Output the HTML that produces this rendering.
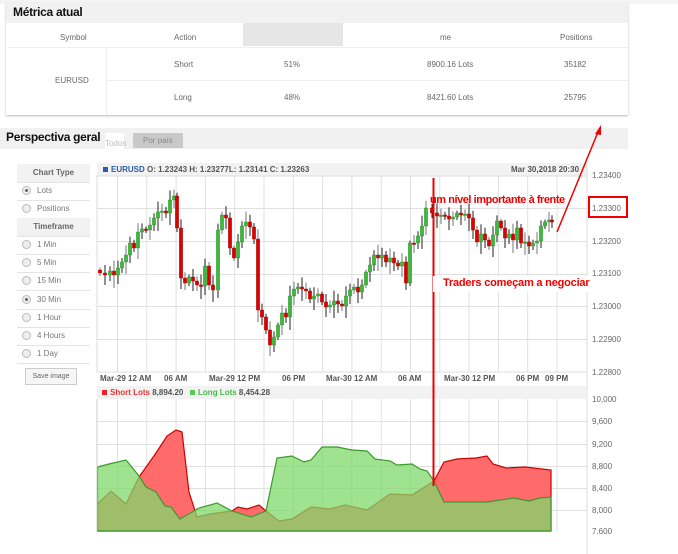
<!DOCTYPE html>
<html><head><meta charset="utf-8">
<style>
body{margin:0;width:678px;height:554px;background:#fff;position:relative;overflow:hidden;font-family:"Liberation Sans",sans-serif;}
.a{position:absolute;}
.t{font-size:8px;color:#666;position:absolute;}
.side{position:absolute;left:17px;width:73px;height:18px;border-bottom:1px solid #e4e4e4;font-size:8px;color:#777;line-height:18px;}
.side.h{background:#f2f2f2;text-align:center;font-weight:bold;color:#666;}
.rad{display:inline-block;width:7px;height:7px;border:1px solid #bbb;border-radius:50%;background:#eee;margin:0 6px 0 5px;vertical-align:-2px;position:relative;}
.rad.on:after{content:"";position:absolute;left:2px;top:2px;width:3px;height:3px;border-radius:50%;background:#666;}
.ax{position:absolute;font-size:8px;color:#666;left:592px;}
.xl{position:absolute;top:374px;font-size:8px;font-weight:bold;color:#555;}
</style></head><body>
<div class="a" style="left:0;top:0;width:678px;height:4px;background:#f4f4f4"></div>
<div class="a" style="left:6px;top:3px;width:622px;height:112px;background:#fff;box-shadow:0 1px 2px #bbb;"></div>
<div class="a" style="left:6px;top:3px;width:622px;height:20px;background:#f1f1f1;"></div>
<div class="a" style="left:13px;top:5px;font-size:12px;font-weight:bold;color:#111;letter-spacing:-0.3px;">Métrica atual</div>
<div class="a" style="left:8px;top:47px;width:620px;height:1px;background:#eee"></div>
<div class="a" style="left:106px;top:80px;width:522px;height:1px;background:#eee"></div>
<div class="a" style="left:106px;top:47px;width:1px;height:68px;background:#eee"></div>
<div class="t" style="left:60px;top:33px">Symbol</div>
<div class="t" style="left:174px;top:33px">Action</div>
<div class="t" style="left:274px;top:33px">Percentage</div>
<div class="t" style="left:440px;top:33px">me</div>
<div class="t" style="left:560px;top:33px">Positions</div>
<div class="a" style="left:243px;top:23px;width:100px;height:23px;background:#e6e6e6"></div>
<div class="t" style="left:55px;top:76px">EURUSD</div>
<div class="t" style="left:174px;top:60px">Short</div>
<div class="t" style="left:284px;top:60px">51%</div>
<div class="t" style="left:427px;top:60px">8900.16 Lots</div>
<div class="t" style="left:564px;top:60px">35182</div>
<div class="t" style="left:174px;top:93px">Long</div>
<div class="t" style="left:284px;top:93px">48%</div>
<div class="t" style="left:427px;top:93px">8421.60 Lots</div>
<div class="t" style="left:564px;top:93px">25795</div>
<div class="a" style="left:0;top:128px;width:628px;height:21px;background:#f1f1f1;"></div>
<div class="a" style="left:6px;top:130px;font-size:12px;font-weight:bold;color:#111;letter-spacing:-0.3px;">Perspectiva geral</div>
<div class="a" style="left:105px;top:133px;width:19px;height:17px;background:#fff;font-size:8px;color:#bbb;line-height:22px;">Todos</div>
<div class="a" style="left:133px;top:133px;width:50px;height:15px;background:#c9c9c9;font-size:8px;color:#888;line-height:15px;text-indent:10px;">Por país</div>
<div class="side h" style="top:164px">Chart Type</div>
<div class="side" style="top:182px"><span class="rad on"></span>Lots</div>
<div class="side" style="top:200px"><span class="rad"></span>Positions</div>
<div class="side h" style="top:218px">Timeframe</div>
<div class="side" style="top:236px"><span class="rad"></span>1 Min</div>
<div class="side" style="top:254px"><span class="rad"></span>5 Min</div>
<div class="side" style="top:272px"><span class="rad"></span>15 Min</div>
<div class="side" style="top:291px"><span class="rad on"></span>30 Min</div>
<div class="side" style="top:309px"><span class="rad"></span>1 Hour</div>
<div class="side" style="top:327px"><span class="rad"></span>4 Hours</div>
<div class="side" style="top:345px"><span class="rad"></span>1 Day</div>
<div class="a" style="left:25px;top:368px;width:50px;height:15px;border:1px solid #ccc;background:#f6f6f6;font-size:7px;color:#666;text-align:center;line-height:15px;">Save image</div>
<svg class="a" style="left:0;top:0" width="678" height="554" id="sv">
<rect x="97" y="163" width="490" height="14" fill="#f2f2f2"/>
<rect x="97" y="176" width="490" height="196" fill="#fff" stroke="#ddd"/>
<g id="grid" stroke="#e0e0e0" stroke-width="1"></g>
<g id="candles"></g>
<rect x="97" y="386" width="489" height="13" fill="#f2f2f2"/>
<g id="grid2" stroke="#e0e0e0"></g>
<path id="sh" fill="#ff6b6b" stroke="#c00" stroke-width="1.2"/>
<path id="lg" fill="#7fd86a" fill-opacity="0.75" stroke="#3a9a2a" stroke-width="1.2"/>
<line x1="97" y1="399" x2="97" y2="531" stroke="#ccc"/>
<line x1="587" y1="163" x2="587" y2="554" stroke="#ddd"/>
<line x1="433.5" y1="178" x2="433.5" y2="486" stroke="#e00" stroke-width="2"/>
<rect x="433" y="276" width="170" height="16" fill="#fff"/>
<line x1="557" y1="232" x2="598" y2="132" stroke="#e00" stroke-width="1.5"/>
<polygon points="601,125 595,134 601,135" fill="#e00"/>
<rect x="589" y="197" width="38" height="20" fill="none" stroke="#e00" stroke-width="2"/>
</svg>
<div class="a" style="left:103px;top:165px;font-size:8px;font-weight:bold;color:#555;"><span style="display:inline-block;width:5px;height:5px;background:#2a5caa;margin-right:3px;"></span><span style="color:#2a5caa">EURUSD</span> O: 1.23243 H: 1.23277L: 1.23141 C: 1.23263</div>
<div class="a" style="left:511px;top:165px;font-size:8px;font-weight:bold;color:#555;">Mar 30,2018 20:30</div>
<div class="ax" style="top:171px">1.23400</div>
<div class="ax" style="top:204px">1.23300</div>
<div class="ax" style="top:237px">1.23200</div>
<div class="ax" style="top:269px">1.23100</div>
<div class="ax" style="top:302px">1.23000</div>
<div class="ax" style="top:335px">1.22900</div>
<div class="ax" style="top:368px">1.22800</div>
<div class="xl" style="left:100px">Mar-29 12 AM</div>
<div class="xl" style="left:164px">06 AM</div>
<div class="xl" style="left:209px">Mar-29 12 PM</div>
<div class="xl" style="left:282px">06 PM</div>
<div class="xl" style="left:326px">Mar-30 12 AM</div>
<div class="xl" style="left:398px">06 AM</div>
<div class="xl" style="left:444px">Mar-30 12 PM</div>
<div class="xl" style="left:516px">06 PM</div>
<div class="xl" style="left:545px">09 PM</div>
<div class="a" style="left:430px;top:194px;font-size:11px;font-weight:bold;color:#e00;letter-spacing:-0.45px;">um nível importante à frente</div>
<div class="a" style="left:443px;top:277px;font-size:11px;font-weight:bold;color:#e00;letter-spacing:-0.2px;">Traders começam a negociar</div>
<div class="a" style="left:102px;top:388px;font-size:8px;font-weight:bold;color:#555;"><span style="display:inline-block;width:5px;height:5px;background:#e22;margin-right:3px;"></span><span style="color:#e33">Short Lots</span> 8,894.20 &nbsp; <span style="display:inline-block;width:5px;height:5px;background:#5c5;margin-right:3px;"></span><span style="color:#4b4">Long Lots</span> 8,454.28</div>
<div class="ax" style="top:395px">10,000</div>
<div class="ax" style="top:417px">9,600</div>
<div class="ax" style="top:440px">9,200</div>
<div class="ax" style="top:462px">8,800</div>
<div class="ax" style="top:484px">8,400</div>
<div class="ax" style="top:506px">8,000</div>
<div class="ax" style="top:527px;height:7px;overflow:hidden">7,600</div>
<script>
var NS="http://www.w3.org/2000/svg";
function el(p,t,a){var e=document.createElementNS(NS,t);for(var k in a)e.setAttribute(k,a[k]);p.appendChild(e);return e;}
var g=document.getElementById('grid'),g2=document.getElementById('grid2');
for(var i=0;i<16;i++){var x=117.5+i*29.3;if(x>586)break;el(g,'line',{x1:x,y1:176,x2:x,y2:372});el(g2,'line',{x1:x,y1:399,x2:x,y2:531});}
[208,241,274,306,339].forEach(function(y){el(g,'line',{x1:97,y1:y+.5,x2:587,y2:y+.5});});
[421,444,466,488,510].forEach(function(y){el(g2,'line',{x1:97,y1:y+.5,x2:587,y2:y+.5});});
var cl=[[100,273],[105,275],[110,271],[114,275],[118,268],[122,262],[126,255],[130,243],[134,248],[138,232],[142,229],[146,230],[150,225],[154,218],[158,212],[162,211],[166,213],[170,200],[174,196],[177,228],[181,278],[185,283],[189,277],[193,281],[197,285],[201,286],[205,266],[209,285],[213,290],[218,230],[222,215],[226,218],[230,248],[234,258],[238,242],[242,226],[246,222],[250,227],[254,239],[258,310],[262,317],[266,330],[270,345],[274,337],[278,325],[282,313],[286,317],[290,296],[294,289],[298,287],[302,289],[306,291],[310,299],[314,296],[318,294],[322,302],[326,307],[330,305],[334,301],[338,304],[342,306],[346,296],[350,290],[354,287],[358,292],[362,285],[366,272],[370,265],[374,255],[378,258],[382,255],[386,262],[390,258],[394,263],[398,266],[402,262],[406,283],[410,243],[414,243],[418,236],[422,226],[426,208],[432,213],[437,216],[441,215],[445,216],[449,219],[453,217],[457,213],[461,215],[465,214],[469,218],[473,230],[477,242],[481,234],[485,240],[489,246],[493,235],[497,221],[501,228],[505,238],[509,234],[513,240],[517,228],[521,243],[525,242],[529,246],[533,243],[537,241],[541,226],[545,222],[549,220],[552,222]];
var c=document.getElementById('candles'),prev=270;
cl.forEach(function(d,i){var x=d[0],o=prev,cc=d[1];var up=cc<o;var top=Math.min(o,cc),bot=Math.max(o,cc);var ext=3+((i*7)%11);
el(c,'line',{x1:x,y1:top-ext*0.8,x2:x,y2:bot+ext,stroke:(i%3?'#222':'#777'),'stroke-width':1});
el(c,'rect',{x:x-1.6,y:top,width:3.2,height:Math.max(1.5,bot-top),fill:up?'#3cb83c':'#d00',stroke:up?'#2a8a2a':'#900','stroke-width':0.4});prev=cc;});
var L=[[97.5,467],[109,464],[126,460],[139,476],[146,487],[156,492],[165,506],[171,507],[180,519],[199,508],[217,503],[232,511],[251,517],[266,511],[277,458],[292,456],[304,462],[311,460],[322,447],[337,447],[352,450],[367,451],[375,459],[390,461],[397,465],[412,464],[420,469],[427,471],[434,481],[444,502],[465,502],[487,502],[514,498],[529,501],[540,498],[551,497]];
var S=[[97.5,504],[111,491],[126,504],[139,477],[156,453],[167,436],[176,430],[182,432],[189,492],[197,517],[210,514],[232,511],[238,507],[247,509],[259,505],[266,511],[279,521],[292,519],[311,507],[330,509],[345,505],[367,510],[390,494],[412,495],[434,481],[444,462],[457,459],[476,458],[487,456],[493,464],[506,468],[525,467],[551,470]];
function path(a){return 'M97.5,531 L'+a.map(function(p){return p.join(',');}).join(' L')+' L551,531 Z';}
document.getElementById('sh').setAttribute('d',path(S));
document.getElementById('lg').setAttribute('d',path(L));
</script>
</body></html>
